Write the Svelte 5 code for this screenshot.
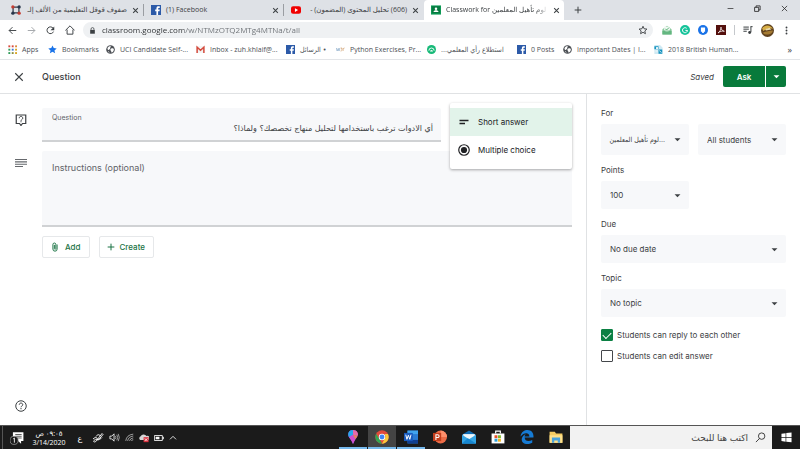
<script>
  const bookmarks = [
    { icon: 'apps', label: 'Apps', width: 30 },
    { icon: 'star', label: 'Bookmarks', width: 48 },
    { icon: 'globe', label: 'UCI Candidate Self-...', width: 80 },
    { icon: 'gmail', label: 'Inbox - zuh.khlaif@...', width: 80 },
    { icon: 'facebook', label: '• الرسائل', width: 40, rtl: true },
    { icon: 'w3r', label: 'Python Exercises, Pr...', width: 81 },
    { icon: 'survey', label: 'استطلاع رأي المعلمي...', width: 80, rtl: true },
    { icon: 'facebook', label: '0 Posts', width: 36 },
    { icon: 'globe', label: 'Important Dates | I...', width: 81 },
    { icon: 'page', label: '2018 British Human...', width: 84 }
  ];
  const tabs = [
    { icon: 'room', label: 'صفوف قوقل التعليمية من الألف إلـ', rtl: true },
    { icon: 'facebook', label: '(1) Facebook' },
    { icon: 'youtube', label: '(606) تحليل المحتوى (المضمون) -', rtl: true },
    { icon: 'classroom', label: 'Classwork for لوم تأهيل المعلمين', active: true }
  ];
  const apps = ['paint', 'chrome', 'word', 'powerpoint', 'mail', 'store', 'edge', 'files'];

  let question = $state('أي الادوات ترغب باستخدامها لتحليل منهاج تخصصك؟ ولماذا؟');
  let instructions = $state('');
  let answerType = $state('short');
  let canReply = $state(true);
  let canEdit = $state(false);
</script>

{#snippet icon(name, size = 10)}
  <svg width={size} height={size} viewBox="0 0 24 24" aria-hidden="true">
    {#if name === 'room'}
      <path d="M5 5h14v14H5z" fill="none" stroke="#333c4a" stroke-width="3" />
      <circle cx="4.500" cy="4.500" r="4" fill="#c43b30" /><circle cx="19.500" cy="4.500" r="4" fill="#27364b" />
      <circle cx="4.500" cy="19.500" r="4" fill="#27364b" /><circle cx="19.500" cy="19.500" r="4" fill="#c43b30" />
      <path d="M8 8h8v8H8z" fill="#dee1e6" />
    {:else if name === 'facebook'}
      <path d="M0 0h24v24H0z" fill="#2c5aa8" />
      <path d="M13 24v-9h-3v-4h3V8c0-3.500 2-5 5-5h3v4h-2c-1.500 0-2 .6-2 2v2h4l-.6 4H17v9z" fill="#fff" />
    {:else if name === 'youtube'}
      <rect y="3" width="24" height="18" rx="5" fill="#f00000" /><path d="M9.500 7.500v9l7.500-4.500z" fill="#fff" />
    {:else if name === 'classroom'}
      <path d="M0 1h24v22H0z" fill="#0f9d58" /><path d="M2 3h20v17H2z" fill="#087a40" />
      <circle cx="12" cy="9" r="3" fill="#fff" /><path d="M6 17c0-3 3-4.500 6-4.500s6 1.500 6 4.500z" fill="#fff" />
    {:else if name === 'apps'}
      {#each [1, 10, 19] as y, r}
        {#each [1, 10, 19] as x, c}
          <rect {x} {y} width="5" height="5" fill={[['#d9493b', '#d9493b', '#d98a3b'], ['#2f9b58', '#3c78d8', '#d9a520'], ['#2f9b58', '#8a8d3b', '#d9a520']][r][c]} />
        {/each}
      {/each}
    {:else if name === 'star'}
      <path d="M12 1l3.300 7.300 7.900.8-6 5.300 1.800 7.800L12 18.100 5 22.200l1.800-7.800-6-5.300 7.900-.8z" fill="#1a73e8" />
    {:else if name === 'globe'}
      <circle cx="12" cy="12" r="11.500" fill="#4c5055" />
      <path d="M4 8c3-5 8-5 9-4 1 2-3 2-2 5 1 2-3 2-4 4s-3-1-3-5zM14 9c3-1 7 0 7 3 0 4-3 8-6 8-2-1 0-4-2-5s-2-5 1-6zM5 16c2 0 4 2 4 5-2-1-3-3-4-5z" fill="#fff" />
    {:else if name === 'gmail'}
      <path d="M1 3h22v18H1z" fill="#f3f3f3" /><path d="M3 21V6l9 8 9-8v15" fill="none" stroke="#d54b3d" stroke-width="4" />
    {:else if name === 'w3r'}
      <path d="M1 8l2 8 3-7 2 7 2-8" fill="none" stroke="#86a9c8" stroke-width="1.800" />
      <path d="M12 8h4l-2 3c4 0 3 5-2 5M19 16V8M19 11c0-2 2-3 4-3" fill="none" stroke="#d3a373" stroke-width="1.800" />
    {:else if name === 'survey'}
      <circle cx="12" cy="12" r="12" fill="#17b978" />
      <path d="M5 15a7 7 0 0 1 14 0" fill="none" stroke="#fff" stroke-width="2.500" /><path d="M8 17a4 4 0 0 1 8 0z" fill="#fff" />
    {:else if name === 'page'}
      <path d="M1 0h15l7 7v17H1z" fill="#cfe9f3" /><path d="M1 3h11v8H1zM12 12h10v11H12z" fill="#1693bf" />
      <circle cx="8" cy="8" r="3" fill="#fff" /><path d="M14 15l6 5M4 16h6" stroke="#fff" stroke-width="2" />
    {:else if name === 'close'}
      <path d="M4 4l16 16M20 4L4 20" stroke="currentColor" stroke-width="3.600" />
    {:else if name === 'thinclose'}
      <path d="M3 3l18 18M21 3L3 21" stroke="currentColor" stroke-width="2.600" />
    {:else if name === 'plus'}
      <path d="M12 2v20M2 12h20" stroke="currentColor" stroke-width="3" />
    {:else if name === 'min'}
      <path d="M2 12h20" stroke="currentColor" stroke-width="2.400" />
    {:else if name === 'restore'}
      <path d="M2 8h14v14H2zM7 8V3h14v14h-5" fill="none" stroke="currentColor" stroke-width="2.800" />
    {:else if name === 'back'}
      <path d="M22 12H3M12 3l-9 9 9 9" fill="none" stroke="currentColor" stroke-width="2.500" />
    {:else if name === 'forward'}
      <path d="M2 12h19M12 3l9 9-9 9" fill="none" stroke="currentColor" stroke-width="2.500" />
    {:else if name === 'reload'}
      <path d="M20 15a9 9 0 1 1-1-9" fill="none" stroke="currentColor" stroke-width="2.600" /><path d="M22 1v10H12z" fill="currentColor" />
    {:else if name === 'home'}
      <path d="M1 13L12 2l11 11M5 11v11h14V11" fill="none" stroke="currentColor" stroke-width="2.300" />
    {:else if name === 'lock'}
      <path d="M4 10h16v13H4z" fill="currentColor" /><path d="M7 10V7a5 5 0 0 1 10 0v3" fill="none" stroke="currentColor" stroke-width="2.600" />
    {:else if name === 'outline'}
      <path d="M12 3l2.700 6.100 6.700.7-5 4.500 1.400 6.600L12 17.500l-5.800 3.400 1.400-6.600-5-4.500 6.700-.7z" fill="none" stroke="currentColor" stroke-width="2.200" />
    {:else if name === 'tray'}
      <path d="M1 10l11-8 11 8v13H1z" fill="#8ccba0" /><path d="M5 4h14v9H5z" fill="#f1f8f3" /><path d="M8 9l3 3 6-6" fill="none" stroke="#3aa55d" stroke-width="2" /><path d="M1 14h6l2 3h6l2-3h6v9H1z" fill="#64b680" />
    {:else if name === 'grammarly'}
      <circle cx="12" cy="12" r="12" fill="#15c39a" /><path d="M16 8a6 6 0 1 0 2 5h-5" fill="none" stroke="#fff" stroke-width="2.400" />
    {:else if name === 'blue'}
      <circle cx="12" cy="12" r="12" fill="#1a73e8" /><path d="M7 6h10v10h-3v3h-4v-3H7z" fill="#fff" />
    {:else if name === 'pdf'}
      <path d="M0 0h24v24H0z" fill="#54100d" /><path d="M5 19c4-2 7-8 7-14 0 6 3 9 8 10-5-1-10 0-15 4z" fill="none" stroke="#fff" stroke-width="1.800" />
    {:else if name === 'playlist'}
      <path d="M1 5h13M1 10h13M1 15h8M19 4v13M18 4h5" fill="none" stroke="currentColor" stroke-width="2.400" /><circle cx="16" cy="18" r="3.500" fill="currentColor" />
    {:else if name === 'avatar'}
      <circle cx="12" cy="12" r="12" fill="#60421f" /><path d="M2 8c6-8 16-6 20 1-6-3-12 0-18 4z" fill="#d7ae45" /><path d="M3 16c6-3 13-3 19-4-1 8-14 10-19 4z" fill="#a57b32" /><path d="M8 9l8-2 3 3-10 2z" fill="#ead9a7" />
    {:else if name === 'dots'}
      <circle cx="12" cy="4" r="2.500" fill="currentColor" /><circle cx="12" cy="12" r="2.500" fill="currentColor" /><circle cx="12" cy="20" r="2.500" fill="currentColor" />
    {:else if name === 'question'}
      <path d="M2.500 2h19v17H15l-3 4-3-4H2.500z" fill="none" stroke="currentColor" stroke-width="2.400" />
      <path d="M8.500 8.500c0-5 7-5 7 0 0 2.500-3.500 2.500-3.500 5" fill="none" stroke="currentColor" stroke-width="2" /><path d="M11 14.500h2v2h-2z" fill="currentColor" />
    {:else if name === 'lines'}
      <path d="M0 5h24M0 9.700h24M0 14.400h24M0 19h16" stroke="#66696d" stroke-width="2.200" />
    {:else if name === 'short'}
      <path d="M3 9h18M3 15h11" stroke="currentColor" stroke-width="3.200" />
    {:else if name === 'radio'}
      <circle cx="12" cy="12" r="10.500" fill="none" stroke="currentColor" stroke-width="2.400" /><circle cx="12" cy="12" r="6.200" fill="currentColor" />
    {:else if name === 'clip'}
      <path d="M17 6v11a5 5 0 0 1-10 0V6a3.500 3.500 0 0 1 7 0v10a1.800 1.800 0 0 1-3.500 0V7" fill="none" stroke="currentColor" stroke-width="2.300" />
    {:else if name === 'help'}
      <circle cx="12" cy="12" r="10.500" fill="none" stroke="currentColor" stroke-width="2" />
      <path d="M8.500 9.500c0-4.500 7-4.500 7 0 0 2.500-3.500 2.500-3.500 5" fill="none" stroke="currentColor" stroke-width="2" /><path d="M11 16h2v2.500h-2z" fill="currentColor" />
    {:else if name === 'arrow'}
      <path d="M2 8h20l-10 10z" fill="currentColor" />
    {:else if name === 'note'}
      <path d="M5 2h18v15h-4v5l-5-5H5z" fill="#fff" /><path d="M9 6h11M9 9h11M9 12h11" stroke="#1b1b1b" stroke-width="1.200" />
      <circle cx="7" cy="16" r="7" fill="#1b1b1b" stroke="#aaa" stroke-width="1.200" /><path d="M5.500 13.500l2-1.500v8" fill="none" stroke="#fff" stroke-width="1.500" />
    {:else if name === 'pen'}
      <path d="M10 16L20 3l2 2-10 12M2 14c5-5 10-3 8 2s-9 5-6 1 12 0 16-6M8 9c2-4 8-5 8-1" fill="none" stroke="#fff" stroke-width="1.800" />
    {:else if name === 'speaker'}
      <path d="M2 9h4l5-5v16l-5-5H2z" fill="none" stroke="#fff" stroke-width="1.800" /><path d="M14 9q2 3 0 6M17 6q4 6 0 12M20 4q5 8 0 16" fill="none" stroke="#ccc" stroke-width="1.600" />
    {:else if name === 'wifi'}
      <path d="M2 21Q4 5 22 3M7 21Q9 10 22 8M12 21Q14 14 22 13M17 21q1-3 5-3" fill="none" stroke="#ddd" stroke-width="1.800" />
    {:else if name === 'cloud'}
      <path d="M3 17a5 5 0 0 1 1-9 8 8 0 0 1 14-1 5 5 0 0 1 4 10z" fill="#d6d6d6" /><path d="M11 10h12v12H11z" fill="#db3340" /><path d="M14 13l6 6M20 13l-6 6" stroke="#fff" stroke-width="2" />
    {:else if name === 'battery'}
      <path d="M1 6h19v12H1zM20 10h3v4h-3" fill="none" stroke="#fff" stroke-width="2" /><path d="M4 9h9v6H4z" fill="#fff" />
    {:else if name === 'chevron'}
      <path d="M3 16l9-9 9 9" fill="none" stroke="#fff" stroke-width="2.500" />
    {:else if name === 'paint'}
      <path d="M12 0C5 0 2 6 5 12c3 4 5 7 7 12 2-5 4-8 7-12 3-6 0-12-7-12z" fill="#8a5be8" />
      <path d="M12 0C5 0 2 6 5 12h7z" fill="#27a8ec" /><path d="M12 0c6 0 10 5 8 10l-8-2z" fill="#e66aaa" /><path d="M5 12l7-4 4 8-4 8c-2-5-4-8-7-12z" fill="#cf4fce" /><path d="M12 8l8 2-4 6z" fill="#ee8256" />
    {:else if name === 'chrome'}
      <circle cx="12" cy="12" r="11.500" fill="#e24a3b" /><path d="M2 6.500L9 18l3 5.500A11.500 11.500 0 0 1 2 6.500z" fill="#31a552" /><path d="M12 23.500l6-11.500-1-5h5.300A11.500 11.500 0 0 1 12 23.500z" fill="#f8ca3c" />
      <circle cx="12" cy="12" r="5.500" fill="#fff" /><circle cx="12" cy="12" r="4.200" fill="#4285f4" />
    {:else if name === 'word'}
      <path d="M6 1h18v22H6z" fill="#2b7cd3" /><path d="M6 1h18v6H6z" fill="#41a5ee" /><path d="M6 17h18v6H6z" fill="#103f91" /><path d="M0 5h15v14H0z" fill="#185abd" /><path d="M3 8l2 8 2.500-7L10 16l2-8" fill="none" stroke="#fff" stroke-width="1.700" />
    {:else if name === 'powerpoint'}
      <circle cx="13" cy="12" r="11" fill="#ed6c47" /><path d="M13 1a11 11 0 0 1 11 11H13z" fill="#ff8f6b" /><path d="M0 5h14v14H0z" fill="#c43e1c" /><path d="M5 17V8h3a2.500 2.500 0 0 1 0 5H5" fill="none" stroke="#fff" stroke-width="1.800" />
    {:else if name === 'mail'}
      <path d="M0 8l12-7 12 7v15H0z" fill="#0f6cb4" /><path d="M2 7h20v10H2z" fill="#eef7fc" /><path d="M0 8l12 8 12-8v15H0z" fill="#35a5e5" /><path d="M0 23l10-9 14 9z" fill="#1686d0" />
    {:else if name === 'store'}
      <path d="M8 6V2h8v4" fill="none" stroke="#fff" stroke-width="2" /><path d="M1 6h22v17H1z" fill="#fff" />
      <path d="M6 9h5v5H6z" fill="#e75127" /><path d="M12 9h5v5h-5z" fill="#7cb82f" /><path d="M6 15h5v5H6z" fill="#2c9fd8" /><path d="M12 15h5v5h-5z" fill="#f5b51f" />
    {:else if name === 'edge'}
      <path d="M1 11C2 3 8 0 13 0c7 0 11 6 10 13H8c0 7 8 7 13 4v5C11 27 2 23 3 15 4 11 7 8 10 7c-1 1-2 2-2 4h8c0-8-10-7-15 0z" fill="#167bd4" />
    {:else if name === 'files'}
      <path d="M1 3h9l2 3h11v16H1z" fill="#f5cc63" /><path d="M1 9h22v13H1z" fill="#ffe18c" /><path d="M5 13h14v9h-4v-4H9v4H5z" fill="#4aa3dc" />
    {:else if name === 'search'}
      <circle cx="14.500" cy="9" r="7" fill="none" stroke="currentColor" stroke-width="2" /><path d="M10 14l-8 8" stroke="currentColor" stroke-width="2" />
    {:else if name === 'windows'}
      <path d="M1 4l9-1.500V11H1zM11.500 2.300L23 1v10H11.500zM1 12.500h9V21l-9-1.500zM11.500 12.500H23v10l-11.500-1.500z" fill="#fff" />
    {/if}
  </svg>
{/snippet}

<div class="screen">
  <div class="tabstrip">
    {#each tabs as tab}
      <div class="tab" class:active={tab.active}>
        {@render icon(tab.icon)}
        <span class="tabtitle" class:fade={tab.active} dir={tab.rtl ? 'rtl' : 'ltr'}>{tab.label}</span>
        <button class="bare" aria-label="Close tab">{@render icon('close', 7)}</button>
      </div>
    {/each}
    <button class="bare newtab" aria-label="New tab">{@render icon('plus', 8)}</button>
    <div class="windowctl">
      <button class="bare" aria-label="Minimize">{@render icon('min', 7)}</button>
      <button class="bare" aria-label="Restore">{@render icon('restore', 7)}</button>
      <button class="bare" aria-label="Close">{@render icon('thinclose', 7)}</button>
    </div>
  </div>

  <div class="toolbar">
    <div class="nav">
      <button class="bare" aria-label="Back">{@render icon('back', 9)}</button>
      <button class="bare dim" aria-label="Forward">{@render icon('forward', 9)}</button>
      <button class="bare" aria-label="Reload">{@render icon('reload', 9)}</button>
      <button class="bare" aria-label="Home">{@render icon('home', 10)}</button>
    </div>
    <div class="omnibox">
      {@render icon('lock', 7)}
      <input aria-label="Address" value="classroom.google.com/w/NTMzOTQ2MTg4MTNa/t/all" />
      <button class="bare" aria-label="Bookmark this page">{@render icon('outline', 10)}</button>
    </div>
    <div class="extensions">
      {#each ['tray', 'grammarly', 'blue', 'pdf'] as name}
        <button class="bare" aria-label={name}>{@render icon(name)}</button>
      {/each}
      <span class="divider"></span>
      <button class="bare" aria-label="Media">{@render icon('playlist', 10)}</button>
      <button class="bare" aria-label="Profile">{@render icon('avatar', 13)}</button>
      <button class="bare" aria-label="Menu">{@render icon('dots', 9)}</button>
    </div>
  </div>

  <nav class="bookmarks" aria-label="Bookmarks">
    {#each bookmarks as mark}
      <a href="#bookmark" style:width="{mark.width}px">
        {@render icon(mark.icon, 9)}
        <span class:condensed={mark.rtl} dir={mark.rtl ? 'rtl' : 'ltr'}>{mark.label}</span>
      </a>
    {/each}
    <button class="bare more" aria-label="More bookmarks">»</button>
  </nav>

  <header>
    <button class="bare" aria-label="Close">{@render icon('thinclose', 10)}</button>
    <h1>Question</h1>
    <em>Saved</em>
    <div class="ask">
      <button>Ask</button>
      <button class="askmore" aria-label="More options">{@render icon('arrow', 7)}</button>
    </div>
  </header>

  <div class="content">
    <main>
      <div class="row">
        <span class="lead">{@render icon('question', 12)}</span>
        <div class="field">
          <label for="question">Question</label>
          <input id="question" dir="rtl" bind:value={question} />
        </div>
        <div class="typeslot">
          <div class="menu" role="listbox" aria-label="Question type">
            <button role="option" aria-selected={answerType === 'short'} onclick={() => (answerType = 'short')}>
              {@render icon('short', 12)}Short answer
            </button>
            <button role="option" aria-selected={answerType === 'multiple'} onclick={() => (answerType = 'multiple')}>
              {@render icon('radio', 12)}Multiple choice
            </button>
          </div>
        </div>
      </div>
      <div class="row">
        <span class="lead">{@render icon('lines', 12)}</span>
        <textarea aria-label="Instructions" placeholder="Instructions (optional)" bind:value={instructions}></textarea>
      </div>
      <div class="attach">
        <button>{@render icon('clip', 10)}Add</button>
        <button>{@render icon('plus', 8)}Create</button>
      </div>
      <button class="bare help" aria-label="Help">{@render icon('help', 12)}</button>
    </main>

    <aside>
      <label for="class">For</label>
      <div class="pair">
        <div class="select tall">
          <select id="class" class="condensed" dir="rtl"><option>...لوم تأهيل المعلمين</option></select>
          {@render icon('arrow', 7)}
        </div>
        <div class="select tall">
          <select aria-label="Students"><option>All students</option></select>
          {@render icon('arrow', 7)}
        </div>
      </div>
      <label for="points">Points</label>
      <div class="pair">
        <div class="select">
          <select id="points"><option>100</option></select>
          {@render icon('arrow', 7)}
        </div>
      </div>
      <label for="due">Due</label>
      <div class="select">
        <select id="due"><option>No due date</option></select>
        {@render icon('arrow', 7)}
      </div>
      <label for="topic">Topic</label>
      <div class="select">
        <select id="topic"><option>No topic</option></select>
        {@render icon('arrow', 7)}
      </div>
      <div class="checks">
        <label><input type="checkbox" bind:checked={canReply} />Students can reply to each other</label>
        <label><input type="checkbox" bind:checked={canEdit} />Students can edit answer</label>
      </div>
    </aside>
  </div>

  <footer>
    <div class="systray">
      <button class="bare" aria-label="Notifications">{@render icon('note', 14)}</button>
      <div class="clock"><span dir="rtl">٠٩:٠٥ ص</span><span>3/14/2020</span></div>
      <span class="lang">ع</span>
      {@render icon('pen', 12)}
      {@render icon('speaker', 11)}
      {@render icon('wifi', 9)}
      {@render icon('cloud', 10)}
      {@render icon('battery', 10)}
      {@render icon('chevron', 8)}
    </div>
    <div class="apps">
      {#each apps as app, i}
        <button class:running={i < 3} class:current={app === 'chrome'} aria-label={app}>{@render icon(app, 14)}</button>
      {/each}
    </div>
    <div class="search" dir="rtl">
      {@render icon('search', 11)}
      <input aria-label="Search" placeholder="اكتب هنا للبحث" />
    </div>
    <button class="start" aria-label="Start">{@render icon('windows', 11)}</button>
  </footer>
</div>

<style>
  :global(body) { margin: 0; }
  .screen {
    display: flex; flex-direction: column; height: 100vh; overflow: hidden;
    background: #fff; color: #3c4043; font: 8px/12px Inter, "DejaVu Sans", sans-serif;
  }
  * { box-sizing: border-box; }
  svg { display: block; flex: none; }
  button, input, select, textarea { font: inherit; color: inherit; margin: 0; border: 0; outline: 0; padding: 0; }
  .bare { display: flex; align-items: center; justify-content: center; background: none; flex: none; }

  .tabstrip, .toolbar, .bookmarks { flex: none; display: flex; align-items: center; font: 7px/12px "Open Sans", "DejaVu Sans", sans-serif; }
  .tabstrip { height: 20px; background: #dee1e6; padding-left: 4px; }
  .tab { display: flex; align-items: center; gap: 5px; width: 140px; height: 12px; padding: 0 4px 0 7px; border-right: 1px solid #9a9da2; }
  .tab:nth-child(3) { border-color: transparent; }
  .tab.active { height: 20px; background: #fff; border: 0; border-radius: 4px 4px 0 0; }
  .tabtitle { flex: 1; min-width: 0; white-space: nowrap; }
  .fade { mask-image: linear-gradient(to right, #000 88%, transparent); }
  .condensed { font-family: "DejaVu Sans Condensed", "DejaVu Sans", sans-serif; font-size: 7px; }
  .newtab { margin-left: 10px; }
  .windowctl { margin-left: auto; display: flex; gap: 20px; padding: 0 12px 4px 0; color: #222; }

  .toolbar { height: 20px; padding: 0 8px; font-size: 8px; }
  .nav { display: flex; gap: 10px; width: 75px; }
  .dim { color: #a0a3a7; }
  .omnibox { flex: 1; display: flex; align-items: center; gap: 6px; height: 16px; padding: 0 5px 0 6px; border-radius: 8px; background: #eff1f3; }
  .omnibox input { flex: 1; min-width: 0; color: transparent; background: linear-gradient(to right, #2b2e31 82px, #6a6e73 82px) text; }
  .extensions { display: flex; align-items: center; gap: 8px; width: 139px; padding-left: 9px; }
  .divider { width: 1px; height: 10px; background: #c5c8cc; }

  .bookmarks { height: 20px; gap: 10px; padding: 0 8px; border-bottom: 1px solid #e3e5e8; }
  .bookmarks a { display: flex; align-items: center; gap: 5px; flex: none; color: #4d5156; text-decoration: none; white-space: nowrap; }
  .more { margin-left: auto; font-size: 9px; }

  header { flex: none; display: flex; align-items: center; height: 34px; padding: 0 14px; border-bottom: 1px solid #e0e2e4; }
  header h1 { margin: 0 auto 0 18px; font-size: 9px; font-weight: 500; }
  header em { margin-right: 9px; }
  .ask { display: flex; gap: 1px; }
  .ask button { display: flex; align-items: center; justify-content: center; width: 42px; height: 21px; border-radius: 2px 0 0 2px; background: #087a3b; color: #fff; font-weight: 600; }
  .ask .askmore { width: 20px; border-radius: 0 2px 2px 0; }

  .content { flex: 1; min-height: 0; display: flex; }
  main { flex: 1; min-width: 0; display: flex; flex-direction: column; gap: 9px; padding: 14px 14px 13px 15px; }
  .row { display: flex; }
  .lead { flex: none; width: 27px; padding-top: 6px; }
  .field { flex: 1; min-width: 0; height: 34px; padding: 4px 8px 0 10px; background: #f7f8fa; border-bottom: 2px solid #d0d2d4; border-radius: 2px 2px 0 0; }
  .field label { display: block; font-size: 7px; line-height: 11px; color: #5f6368; }
  .field input { display: block; width: 100%; background: none; font: 8px/11px "DejaVu Sans", sans-serif; }
  .typeslot { position: relative; flex: none; width: 122px; margin-left: 9px; }
  .menu { position: absolute; top: -5px; left: 0; right: 0; padding: 5px 0; border-radius: 2px; background: #fff; box-shadow: 0 1px 3px #0005; color: #202124; }
  .menu button { display: flex; align-items: center; gap: 8px; width: 100%; height: 28px; padding-left: 8px; background: none; }
  .menu button[aria-selected="true"] { background: #e2f3ea; }
  textarea { flex: 1; min-width: 0; height: 76px; padding: 11px 10px; resize: none; background: #f7f8fa; border-bottom: 2px solid #d0d2d4; border-radius: 2px 2px 0 0; font-size: 9px; }
  textarea::placeholder { color: #5f6368; }
  .attach { display: flex; gap: 9px; margin-left: 27px; }
  .attach button { display: flex; align-items: center; gap: 5px; height: 22px; padding: 0 8px 0 7px; border: 1px solid #e6e8ea; border-radius: 2px; background: #fff; color: #1a7344; font-weight: 500; }
  .help { margin-top: auto; align-self: flex-start; }

  aside { flex: none; width: 214px; padding: 13px 14px; border-left: 1px solid #e0e2e4; }
  aside > label { display: block; margin-bottom: 5px; }
  .pair { display: grid; grid-template-columns: 1fr 1fr; gap: 9px; }
  .select { display: grid; align-items: center; height: 28px; margin-bottom: 9px; background: #f7f8fa; border-radius: 2px; }
  .select.tall { height: 31px; }
  .select select, .select svg { grid-area: 1 / 1; }
  .select svg { justify-self: end; margin-right: 8px; pointer-events: none; }
  .select select { appearance: none; width: 100%; height: 100%; padding: 0 20px 0 9px; background: none; }
  .select .condensed { padding: 0 24px 0 6px; }
  .checks { display: flex; flex-direction: column; gap: 9px; margin-top: 12px; }
  .checks label { display: flex; align-items: center; gap: 4px; }
  .checks input { appearance: none; display: grid; place-items: center; width: 12px; height: 12px; border: 1px solid #44474b; border-radius: 1px; }
  .checks input:checked { border-color: #0b8043; background: #0b8043; }
  .checks input:checked::after { content: ""; width: 7px; height: 4px; margin-bottom: 2px; border: solid #fff; border-width: 0 0 1px 1px; transform: rotate(-45deg); }

  footer { flex: none; display: flex; height: 24px; background: #1b1b1b; color: #fff; border-top: 1px solid #555; }
  .systray { flex: 1; display: flex; align-items: center; gap: 5px; margin-left: 2px; border-left: 1px solid #555; padding-left: 7px; }
  .clock { display: flex; flex-direction: column; align-items: center; width: 38px; margin-left: 1px; font: 7px/9px "Open Sans", "DejaVu Sans", sans-serif; }
  .lang { width: 14px; text-align: center; }
  .apps { display: flex; gap: 1px; }
  .apps button { display: grid; place-items: center; width: 28px; background: none; border-bottom: 2px solid transparent; }
  .apps .running { border-color: #76b9ed; }
  .apps .current { background: #444; }
  .search { display: flex; align-items: center; gap: 7px; width: 202px; padding: 0 6px; background: #f2f2f2; color: #333; }
  .search input { flex: 1; min-width: 0; background: none; font-size: 9px; }
  .search input::placeholder { color: #444; }
  .start { display: grid; place-items: center; width: 28px; background: none; }
</style>
